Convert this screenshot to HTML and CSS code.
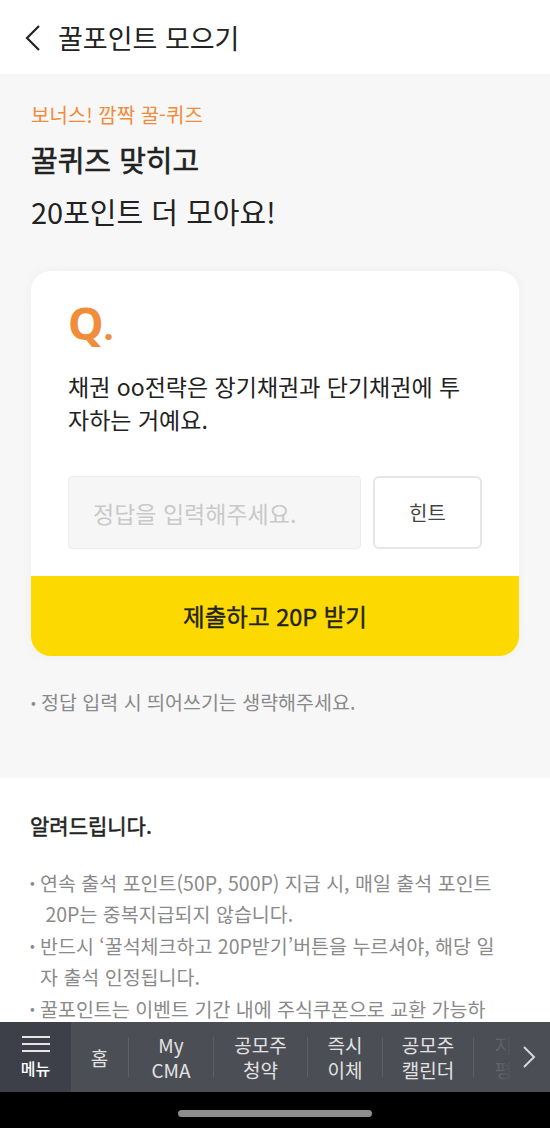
FILE: index.html
```html
<!DOCTYPE html>
<html lang="ko">
<head>
    <meta charset="UTF-8">
    <meta name="viewport" content="width=device-width, initial-scale=1.0">
    <title>꿀포인트 모으기</title>
    <link rel="stylesheet" href="styles.css">
</head>
<body>
    <div class="page">
        <header class="top-bar">
            <svg class="back" width="18" height="28" viewBox="0 0 18 28">
                <path d="M15 2 L3 14 L15 26" fill="none" stroke="#222" stroke-width="2.2"/>
            </svg>
            <h1>꿀포인트 모으기</h1>
        </header>

        <main class="content">
            <section class="quiz-area">
                <p class="eyebrow">보너스! 깜짝 꿀-퀴즈</p>
                <h2 class="headline"><strong>꿀퀴즈 맞히고</strong><br>20포인트 더 모아요!</h2>

                <div class="card">
                    <div class="card-body">
                        <div class="q-mark">Q<span>.</span></div>
                        <p class="question">채권 oo전략은 장기채권과 단기채권에 투<br>자하는 거예요.</p>
                        <div class="answer-row">
                            <input type="text" class="answer" placeholder="정답을 입력해주세요.">
                            <button type="button" class="hint">힌트</button>
                        </div>
                    </div>
                    <button type="button" class="submit">제출하고 20P 받기</button>
                </div>

                <p class="note"><span class="dot">•</span>정답 입력 시 띄어쓰기는 생략해주세요.</p>
            </section>

            <section class="notice">
                <h3>알려드립니다.</h3>
                <ul>
                    <li><span class="dot">•</span><span>연속 출석 포인트(50P, 500P) 지급 시, 매일 출석 포인트<br>&nbsp;20P는 중복지급되지 않습니다.</span></li>
                    <li><span class="dot">•</span><span>반드시 ‘꿀석체크하고 20P받기’버튼을 누르셔야, 해당 일<br>자 출석 인정됩니다.</span></li>
                    <li><span class="dot">•</span><span>꿀포인트는 이벤트 기간 내에 주식쿠폰으로 교환 가능하</span></li>
                </ul>
            </section>
        </main>

        <nav class="bottom-nav">
            <div class="menu">
                <div class="burger"><i></i><i></i><i></i></div>
                <span>메뉴</span>
            </div>
            <div class="nav-items">
                <a class="item w-home">홈</a>
                <a class="item w-cma">My<br>CMA</a>
                <a class="item w-ipo">공모주<br>청약</a>
                <a class="item w-send">즉시<br>이체</a>
                <a class="item w-cal">공모주<br>캘린더</a>
                <a class="item w-more">지<br>평</a>
                <div class="fade">
                    <svg width="14" height="24" viewBox="0 0 14 24">
                        <path d="M2 2 L12 12 L2 22" fill="none" stroke="#d8d8d8" stroke-width="2"/>
                    </svg>
                </div>
            </div>
        </nav>

        <div class="home-bar"><span></span></div>
    </div>
</body>
</html>
```

FILE: styles.css
```css
* {
    box-sizing: border-box;
}
body {
    margin: 0;
    font-family: "Noto Sans CJK KR", "Noto Sans", sans-serif;
    color: #222;
    background: #000;
}
.page {
    width: 550px;
    height: 1128px;
    display: flex;
    flex-direction: column;
    overflow: hidden;
    background: #f7f7f7;
}
.top-bar {
    height: 74px;
    flex: none;
    display: flex;
    align-items: center;
    padding-left: 24px;
    background: #fff;
}
.back {
    margin-right: 16px;
    margin-top: 2px;
}
.top-bar h1 {
    margin: 0;
    font-size: 27px;
    font-weight: 400;
    color: #222;
}
.content {
    flex: 1;
    overflow: hidden;
}
.quiz-area {
    padding: 27px 31px 0;
    height: 704px;
}
.eyebrow {
    margin: 0;
    font-size: 20px;
    line-height: 28px;
    color: #f08c3a;
}
.headline {
    margin: 4px 0 0;
    font-size: 29px;
    font-weight: 400;
    line-height: 52px;
    color: #222;
}
.headline strong {
    font-weight: 400;
    -webkit-text-stroke: 0.6px #222;
}
.card {
    margin-top: 34px;
    background: #fff;
    border-radius: 20px;
    overflow: hidden;
    box-shadow: 0 0 12px rgba(0, 0, 0, 0.04);
}
.card-body {
    padding: 27px 37px 27px;
}
.q-mark {
    font-family: "Noto Sans", sans-serif;
    font-size: 45px;
    font-weight: 700;
    line-height: 50px;
    color: #f08c3a;
}
.q-mark span {
    font-size: 36px;
}
.question {
    margin: 18px 0 0;
    font-size: 23px;
    line-height: 33px;
    color: #222;
}
.answer-row {
    display: flex;
    margin-top: 40px;
    gap: 12px;
}
.answer {
    width: 293px;
    height: 73px;
    padding: 0 24px;
    border: 1px solid #ececec;
    border-radius: 4px;
    background: #f6f6f6;
    font-family: inherit;
    font-size: 23px;
    color: #222;
    outline: none;
}
.answer::placeholder {
    color: #c9c9c9;
}
.hint {
    width: 109px;
    height: 73px;
    border: 2px solid #e6e6e6;
    border-radius: 6px;
    background: #fff;
    font-family: inherit;
    font-size: 20px;
    color: #444;
}
.submit {
    display: block;
    width: 100%;
    height: 80px;
    border: none;
    background: #fcd900;
    font-family: inherit;
    font-size: 23.5px;
    font-weight: 400;
    -webkit-text-stroke: 0.4px #222;
    color: #222;
}
.note {
    margin: 32px 0 0;
    font-size: 19.5px;
    line-height: 28px;
    color: #8a8a8a;
}
.dot {
    display: inline-block;
    width: 10px;
    font-size: 14px;
    vertical-align: top;
}
.notice {
    background: #fff;
    padding: 32px 30px 0;
    height: 300px;
}
.notice h3 {
    margin: 0;
    font-size: 21px;
    font-weight: 400;
    -webkit-text-stroke: 0.5px #222;
    line-height: 30px;
    color: #222;
}
.notice ul {
    list-style: none;
    margin: 27px 0 0;
    padding: 0;
}
.notice li {
    display: flex;
    font-size: 19.5px;
    line-height: 31px;
    color: #8a8a8a;
    margin-bottom: 1px;
}
.notice li .dot {
    flex: none;
}
.bottom-nav {
    flex: none;
    height: 70px;
    display: flex;
    background: #4c4e55;
}
.menu {
    width: 71px;
    flex: none;
    display: flex;
    flex-direction: column;
    align-items: center;
    justify-content: center;
    background: #3d4048;
    color: #fff;
    font-size: 16px;
    font-weight: 500;
}
.burger {
    display: flex;
    flex-direction: column;
    gap: 5px;
    margin-bottom: 6px;
}
.burger i {
    display: block;
    width: 28px;
    height: 2px;
    background: #e6e6e6;
}
.menu span {
    line-height: 20px;
}
.nav-items {
    flex: 1;
    position: relative;
    display: flex;
    align-items: center;
}
.item {
    text-align: center;
    font-size: 19px;
    line-height: 25px;
    color: #e2e2e2;
    border-left: 1px solid #5d6067;
    height: 40px;
    display: flex;
    align-items: center;
    justify-content: center;
}
.item:first-child {
    border-left: none;
}
.w-home { width: 57px; }
.w-cma { width: 85px; }
.w-ipo { width: 94px; }
.w-send { width: 75px; }
.w-cal { width: 91px; }
.w-more { width: 60px; color: #6e7177; }
.fade {
    position: absolute;
    top: 0;
    right: 0;
    width: 60px;
    height: 100%;
    display: flex;
    align-items: center;
    justify-content: flex-end;
    padding-right: 14px;
    background: linear-gradient(to right, rgba(76, 78, 85, 0), #4c4e55 40%);
}
.home-bar {
    flex: none;
    height: 36px;
    background: #000;
    display: flex;
    justify-content: center;
    padding-top: 18px;
}
.home-bar span {
    width: 194px;
    height: 7px;
    border-radius: 4px;
    background: #8e8e8e;
}
```
